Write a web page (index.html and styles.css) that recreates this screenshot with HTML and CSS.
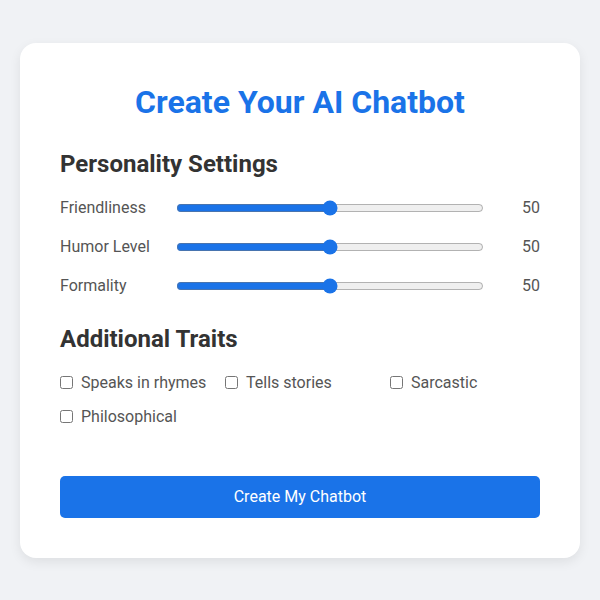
FILE: index.html
```html
<!DOCTYPE html>
<html>
<head>
<meta charset="utf-8">
<link rel="stylesheet" href="styles.css">
</head>
<body>
<div class="card">
  <h1 class="title">Create Your AI Chatbot</h1>
  <h2 class="section">Personality Settings</h2>
  <div class="sliders">
    <div class="row"><label class="lbl">Friendliness</label><input class="range" type="range" min="0" max="100" value="50"><span class="val">50</span></div>
    <div class="row"><label class="lbl">Humor Level</label><input class="range" type="range" min="0" max="100" value="50"><span class="val">50</span></div>
    <div class="row"><label class="lbl">Formality</label><input class="range" type="range" min="0" max="100" value="50"><span class="val">50</span></div>
  </div>
  <h2 class="section">Additional Traits</h2>
  <div class="traits">
    <label class="trait"><input type="checkbox">Speaks in rhymes</label>
    <label class="trait"><input type="checkbox">Tells stories</label>
    <label class="trait"><input type="checkbox">Sarcastic</label>
    <label class="trait"><input type="checkbox">Philosophical</label>
  </div>
  <button class="btn">Create My Chatbot</button>
</div>
</body>
</html>
```
FILE: styles.css
```css
html, body { margin: 0; padding: 0; }
body {
  background: #f0f2f5;
  font-family: Roboto, "Liberation Sans", sans-serif;
  height: 600px;
  display: flex;
  align-items: center;
  justify-content: center;
}
.card {
  width: 480px;
  background: #fff;
  border-radius: 16px;
  padding: 40px;
  box-shadow: 0 4px 12px rgba(0,0,0,0.08);
}
.title {
  margin: 0 0 28px;
  text-align: center;
  color: #1a73e8;
  font-size: 32px;
  font-weight: 700;
  line-height: 38px;
}
.section {
  margin: 0 0 19px;
  font-size: 24px;
  font-weight: 700;
  color: #333;
  line-height: 30px;
}
.sliders {
  display: flex;
  flex-direction: column;
  gap: 19px;
  margin-bottom: 28px;
}
.row {
  display: flex;
  align-items: center;
  gap: 16px;
  height: 20px;
}
.lbl { width: 100px; font-size: 16px; color: #555; }
.range {
  flex: 1;
  margin: 0;
  accent-color: #1a73e8;
}
.val { width: 40px; text-align: right; font-size: 16px; color: #555; }
.traits {
  display: grid;
  grid-template-columns: repeat(3, 1fr);
  column-gap: 15px;
  row-gap: 15px;
  margin-bottom: 50px;
}
.trait {
  display: flex;
  align-items: center;
  gap: 8px;
  font-size: 16px;
  color: #555;
  line-height: 19px;
}
.trait input { margin: 0; width: 13px; height: 13px; }
.btn {
  display: block;
  width: 100%;
  height: 42px;
  border: none;
  border-radius: 5px;
  background: #1a73e8;
  color: #fff;
  font-family: Roboto, "Liberation Sans", sans-serif;
  font-size: 16px;
}
```
